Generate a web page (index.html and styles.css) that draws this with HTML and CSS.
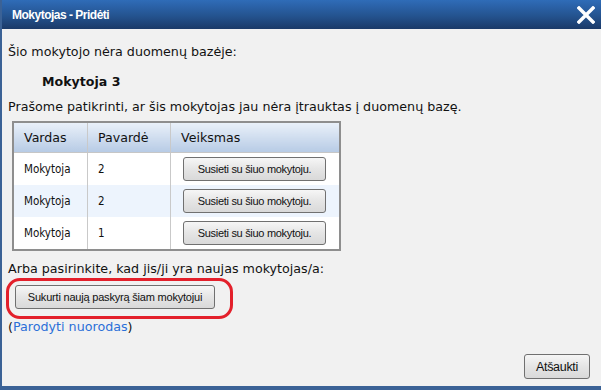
FILE: index.html
```
<!DOCTYPE html>
<html lang="lt">
<head>
    <meta charset="UTF-8">
    <title>Mokytojas - Pridėti</title>
    <link rel="stylesheet" href="styles.css">
</head>
<body>
    <div class="dialog">
        <div class="titlebar">
            <span class="title">Mokytojas - Pridėti</span>
            <span class="close">
                <svg width="18" height="18" viewBox="0 0 18 18">
                    <path d="M2 2 L16 16 M16 2 L2 16" stroke="#fff" stroke-width="3.4" stroke-linecap="square"/>
                </svg>
            </span>
        </div>

        <div class="content">
            <p class="line first">Šio mokytojo nėra duomenų bazėje:</p>
            <p class="name">Mokytoja 3</p>
            <p class="line">Prašome patikrinti, ar šis mokytojas jau nėra įtrauktas į duomenų bazę.</p>

            <table class="matches">
                <thead>
                    <tr>
                        <th class="c1">Vardas</th>
                        <th class="c2">Pavardė</th>
                        <th class="c3">Veiksmas</th>
                    </tr>
                </thead>
                <tbody>
                    <tr>
                        <td>Mokytoja</td>
                        <td>2</td>
                        <td><button class="btn link-btn">Susieti su šiuo mokytoju.</button></td>
                    </tr>
                    <tr class="alt">
                        <td>Mokytoja</td>
                        <td>2</td>
                        <td><button class="btn link-btn">Susieti su šiuo mokytoju.</button></td>
                    </tr>
                    <tr>
                        <td>Mokytoja</td>
                        <td>1</td>
                        <td><button class="btn link-btn">Susieti su šiuo mokytoju.</button></td>
                    </tr>
                </tbody>
            </table>

            <p class="line">Arba pasirinkite, kad jis/ji yra naujas mokytojas/a:</p>
            <div class="highlight">
                <button class="btn create-btn">Sukurti naują paskyrą šiam mokytojui</button>
            </div>
            <p class="line help">(<a href="#">Parodyti nuorodas</a>)</p>

            <div class="footer">
                <button class="btn cancel-btn">Atšaukti</button>
            </div>
        </div>
    </div>
</body>
</html>
```

FILE: styles.css
```
html, body {
    margin: 0;
    padding: 0;
}

body {
    width: 601px;
    height: 390px;
    overflow: hidden;
    font-family: "DejaVu Sans", Verdana, sans-serif;
    font-size: 12px;
    color: #111;
}

.dialog {
    display: flex;
    flex-direction: column;
    height: 390px;
    box-sizing: border-box;
    border-left: 2px solid #3b6296;
    border-bottom: 4px solid #3b6296;
    background: #f1f1f1;
}

.titlebar {
    height: 29px;
    display: flex;
    align-items: center;
    justify-content: space-between;
    padding: 0 6px 0 10px;
    background: linear-gradient(#2f6cb8, #24538f 55%, #1b3a68);
    color: #fff;
}

.title {
    font-family: "Liberation Sans", Arial, sans-serif;
    font-weight: bold;
    font-size: 12px;
    letter-spacing: -0.5px;
}

.close {
    display: flex;
    padding-top: 1px;
}

.content {
    flex: 1;
    padding: 0 0 0 6px;
    display: flex;
    flex-direction: column;
}

p {
    margin: 0;
}

.line {
    font-size: 12.7px;
    line-height: 16px;
}

.first {
    margin-top: 15px;
}

.name {
    font-weight: bold;
    font-size: 12.6px;
    margin: 14px 0 9px 34px;
    line-height: 16px;
}

.matches {
    margin: 6px 0 10px 4px;
    width: 329px;
    border-collapse: collapse;
    border: 2px solid #8e8e8e;
    background: #fff;
}

.matches th {
    height: 29px;
    text-align: left;
    font-weight: normal;
    font-size: 12.6px;
    padding: 0 0 0 10px;
    background: linear-gradient(#e9f0f9, #b7cbe5);
    border-right: 1px solid #c9c9c9;
    border-bottom: 1px solid #c6c6c6;
}

.matches th.c1 { width: 63px; }
.matches th.c2 { width: 72px; }
.matches th.c3 { border-right: none; }

.matches td {
    height: 32px;
    padding: 0 0 0 10px;
    font-family: "DejaVu Sans Condensed", "DejaVu Sans", sans-serif;
    font-size: 11.5px;
    border-right: 1px solid #c9c9c9;
}

.matches td:last-child {
    border-right: none;
    padding-left: 12px;
}

.matches tr.alt td {
    background: #edf4fd;
}

.btn {
    font-family: "Liberation Sans", Arial, sans-serif;
    font-size: 11px;
    color: #111;
    background: linear-gradient(#f6f6f6, #e5e5e5 50%, #d9d9d9);
    border: 1px solid #707070;
    border-radius: 3px;
    padding: 0;
}

.link-btn {
    width: 143px;
    height: 24px;
    letter-spacing: -0.3px;
}

.highlight {
    align-self: flex-start;
    margin: 1px 0 0 -2px;
    padding: 4px 15px 7px 6px;
    border: 3px solid #e3202b;
    border-radius: 14px;
}

.create-btn {
    width: 200px;
    height: 24px;
    letter-spacing: -0.2px;
}

.help {
    margin-top: 0;
}

.help a {
    color: #2b6fd8;
    text-decoration: none;
}

.footer {
    margin-top: auto;
    display: flex;
    justify-content: flex-end;
    padding: 0 11px 7px 0;
}

.cancel-btn {
    width: 66px;
    height: 25px;
    font-size: 12.5px;
    letter-spacing: -0.3px;
}
```
